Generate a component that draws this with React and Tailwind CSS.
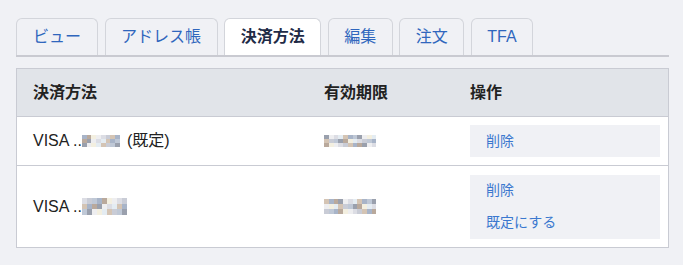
import React from "react";

const tabs = [
    { label: "ビュー", w: "w-[82px]" },
    { label: "アドレス帳", w: "w-[113px]" },
    { label: "決済方法", w: "w-[97px]", active: true },
    { label: "編集", w: "w-[65px]" },
    { label: "注文", w: "w-[65px]" },
    { label: "TFA", w: "w-[62px]" },
];

// pixelated placeholders for the masked card digits / dates
const mosaicColors = ["#c9ccd6", "#b9a99c", "#dcdde4", "#a8b4c8", "#eeeef0", "#d4c4b4", "#9aa0ad", "#e4ecf2", "#bfc8d6", "#f3efe0"];

function Mosaic({ cols, rows, w, h, seed }) {
    const cells = [];
    for (let i = 0; i < cols * rows; i++) {
        cells.push(mosaicColors[(i * 7 + seed * 3 + (i % 3)) % mosaicColors.length]);
    }
    return (
        <span
            className="inline-grid align-middle"
            style={{ gridTemplateColumns: `repeat(${cols}, ${w}px)`, gridAutoRows: `${h}px` }}
        >
            {cells.map((c, i) => (
                <span key={i} style={{ background: c }} />
            ))}
        </span>
    );
}

export default function App() {
    return (
        <div
            className="w-[683px] h-[265px] bg-[#f0f1f5] pt-[18px] px-4 text-[#222]"
            style={{ fontFamily: '"Liberation Sans", "Noto Sans CJK JP", sans-serif' }}
        >
            <div className="w-[653px] flex gap-[6.6px] border-b-2 border-[#c9cad1]">
                {tabs.map((t) => (
                    <div
                        key={t.label}
                        className={`${t.w} h-[37px] flex items-center justify-center rounded-t-[6px] border border-b-0 border-[#d3d5db] text-[16px] ${
                            t.active ? "bg-white font-bold text-[#1f2b46]" : "text-[#2f66bd]"
                        }`}
                    >
                        {t.label}
                    </div>
                ))}
            </div>

            <div className="mt-[11px] w-[653px] border border-[#c9cbd3] bg-white grid grid-cols-[291px_146px_1fr] text-[16px]">
                {/* header */}
                <div className="h-[48px] bg-[#e1e4e9] border-b border-[#c9cbd3] flex items-center px-4 font-bold">決済方法</div>
                <div className="h-[48px] bg-[#e1e4e9] border-b border-[#c9cbd3] flex items-center px-4 font-bold">有効期限</div>
                <div className="h-[48px] bg-[#e1e4e9] border-b border-[#c9cbd3] flex items-center px-4 font-bold">操作</div>

                {/* row 1 */}
                <div className="h-[49px] border-b border-[#c9cbd3] flex items-center px-4">
                    <span>VISA ..</span>
                    <Mosaic cols={8} rows={3} w={4.75} h={4} seed={1} />
                    <span className="ml-[7px]">(既定)</span>
                </div>
                <div className="h-[49px] border-b border-[#c9cbd3] flex items-center px-4">
                    <Mosaic cols={11} rows={3} w={4.75} h={4} seed={2} />
                </div>
                <div className="h-[49px] border-b border-[#c9cbd3] flex items-center pl-4 pr-2">
                    <div className="w-full h-[32px] bg-[#f0f1f5] flex items-center px-4 text-[14px] text-[#3b78cf]">削除</div>
                </div>

                {/* row 2 */}
                <div className="h-[81px] flex items-center px-4">
                    <span>VISA ..</span>
                    <Mosaic cols={9} rows={3} w={5} h={5.6} seed={4} />
                </div>
                <div className="h-[81px] flex items-center px-4">
                    <Mosaic cols={11} rows={3} w={4.75} h={5.3} seed={5} />
                </div>
                <div className="h-[81px] flex items-center pl-4 pr-2">
                    <div className="w-full bg-[#f0f1f5] flex flex-col text-[14px] text-[#3b78cf]">
                        <div className="h-[32px] flex items-center px-4">削除</div>
                        <div className="h-[32px] flex items-center px-4">既定にする</div>
                    </div>
                </div>
            </div>
        </div>
    );
}
